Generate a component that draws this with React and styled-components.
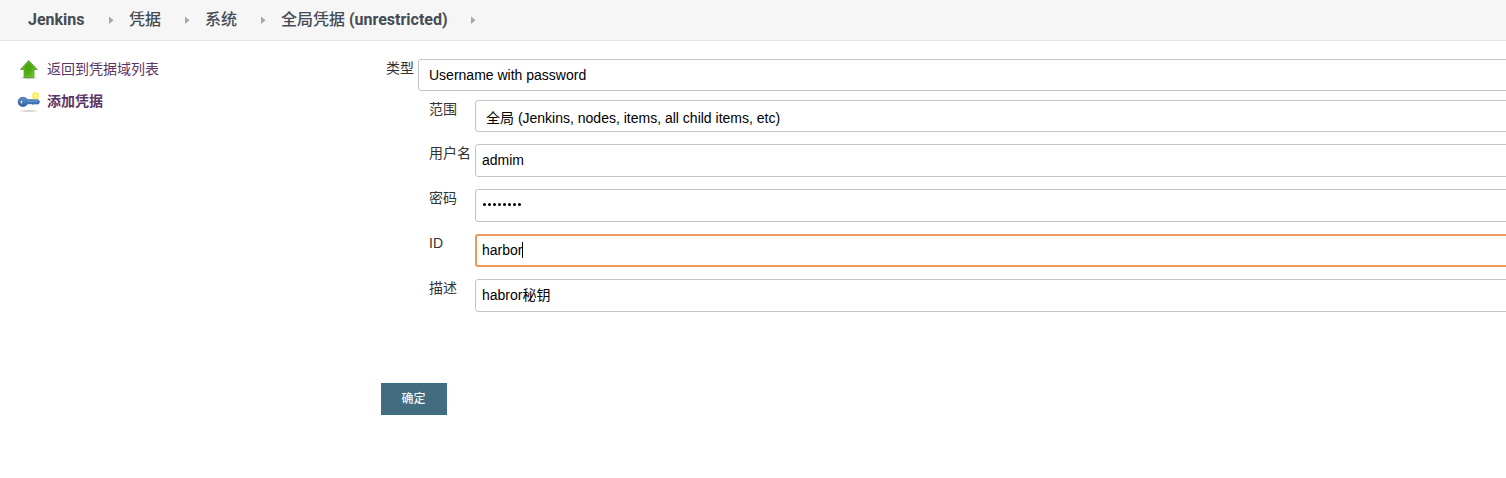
import React from "react";
import styled, { createGlobalStyle } from "styled-components";

const Global = createGlobalStyle`
  * { box-sizing: border-box; }
  html, body { margin: 0; overflow: hidden; background: #fff; }
  body { font-family: "Liberation Sans", "Noto Sans CJK SC", sans-serif; font-size: 14px; color: #333; }
`;

const Page = styled.div`
  height: 478px;
  overflow: hidden;
`;

const Breadcrumbs = styled.nav`
  display: flex;
  align-items: center;
  height: 41px;
  padding: 0 0 0 28px;
  background: #f6f6f6;
  border-bottom: 1px solid #e3e5e9;
  font: 700 16px/24px Roboto, "Noto Sans CJK SC", sans-serif;
  color: #454c54;
`;

const Crumb = styled.a`
  width: ${(p) => p.$width}px;
  white-space: nowrap;
  font-weight: ${(p) => (p.$cjk ? 500 : 700)};
  b { font-weight: 700; }
`;

const Separator = styled.svg`
  flex: none;
  width: 5px;
  height: 8px;
  margin: 0 15px 0 24px;
  fill: #a6a8ab;
`;

const Body = styled.div`
  display: flex;
`;

const Sidebar = styled.aside`
  flex: none;
  width: 381px;
  padding: 12px 0 0 17px;
`;

const Task = styled.a`
  display: flex;
  align-items: center;
  height: 32px;
  color: #5c3566;
  font-family: Roboto, "Noto Sans CJK SC", sans-serif;
  font-size: 14px;
  line-height: 20px;
  font-weight: ${(p) => (p.$active ? 700 : 400)};
  svg { flex: none; margin-right: 6px; }
`;

const Form = styled.form`
  flex: none;
  width: 1140px;
  padding-top: 18px;
`;

const Row = styled.div`
  display: flex;
  height: ${(p) => p.$height}px;
  padding-left: ${(p) => p.$indent}px;
`;

const Label = styled.label`
  flex: none;
  width: ${(p) => p.$width}px;
  line-height: 18px;
  white-space: nowrap;
`;

const Field = styled.div`
  flex: 1;
  display: flex;
  align-items: center;
  height: ${(p) => (p.$select ? 32 : 33)}px;
  padding-top: ${(p) => p.$drop || 0}px;
  padding-bottom: ${(p) => (p.$select ? 0 : 2)}px;
  padding-left: ${(p) => (p.$select ? 10 : p.$focused ? 5 : 6)}px;
  border: ${(p) => (p.$focused ? "2px solid #ee9a5d" : "1px solid #c4c4c4")};
  border-radius: 3px;
  background: #fff;
  color: #000;
  line-height: 20px;
  white-space: nowrap;
`;

const Caret = styled.span`
  width: 1px;
  height: 16px;
  background: #000;
`;

const Dots = styled.span`
  display: flex;
  gap: 2px;
  margin: -1px 0 0 0.5px;
  i { width: 3px; height: 3px; border-radius: 50%; background: #000; }
`;

const Submit = styled.button`
  display: block;
  width: 66px;
  height: 32px;
  margin-top: 59px;
  padding: 0 1px 2px 0;
  border: 1px solid #3b6f8a;
  background: #446c80;
  color: #f3f6f8;
  font: 500 12px/18px "Noto Sans CJK SC", sans-serif;
`;

const Arrow = () => (
  <Separator viewBox="0 0 5 8"><path d="M0 .5 4.5 4.3 0 8Z" /></Separator>
);

const UpIcon = () => (
  <svg width="24" height="24" viewBox="0 0 24 24">
    <defs>
      <linearGradient id="leaf" x1="0" y1="0" x2="1" y2="1">
        <stop offset="0" stopColor="#4a9b0c" />
        <stop offset=".6" stopColor="#4fab12" />
        <stop offset="1" stopColor="#74d628" />
      </linearGradient>
      <radialGradient id="shade">
        <stop offset="0" stopColor="#666" stopOpacity=".6" />
        <stop offset="1" stopColor="#666" stopOpacity="0" />
      </radialGradient>
    </defs>
    <ellipse cx="11.8" cy="20.7" rx="9.5" ry="2" fill="url(#shade)" />
    <path d="M11.7 3.6 20.3 12.5H17V20.5H7V12.5H3.4Z" fill="url(#leaf)" stroke="#459816" strokeWidth=".7" strokeLinejoin="round" />
    <path d="M11.7 5 18.2 11.7H16V19.6H8V11.7H5.3Z" fill="none" stroke="#8ccf58" strokeWidth=".6" opacity=".7" />
  </svg>
);

const KeyIcon = () => (
  <svg width="24" height="24" viewBox="0 0 24 24">
    <defs>
      <linearGradient id="steel" x1="0" y1="0" x2="0" y2="1">
        <stop offset="0" stopColor="#5f92cf" />
        <stop offset="1" stopColor="#2f62a8" />
      </linearGradient>
      <radialGradient id="glow">
        <stop offset="0" stopColor="#fffdd0" />
        <stop offset=".3" stopColor="#fff9a0" />
        <stop offset=".6" stopColor="#fbe93a" />
        <stop offset="1" stopColor="#fff04a" stopOpacity=".35" />
      </radialGradient>
    </defs>
    <ellipse cx="12" cy="22" rx="11" ry="1.5" fill="url(#shade)" opacity=".7" />
    <path d="M5.8 8.4C8.2 8.2 9.7 9.3 10.5 10.7H21L22.6 12.6 21.4 15H20L19 14.4 18 15.5 17 14.5 16 15.5 15 14.7H10.5C9.5 16.7 7.7 17.6 5.4 17.4 2.8 17.2 1.2 15.4 1.2 12.9 1.2 10.2 3 8.5 5.8 8.4Z" fill="url(#steel)" stroke="#2c5b9e" strokeWidth=".8" />
    <ellipse cx="4.5" cy="13" rx="1.3" ry="1.8" fill="#fff" stroke="#204a87" strokeWidth=".6" />
    <path d="M10.5 12.2H20" stroke="#7ba7db" strokeWidth=".7" />
    <circle cx="18.5" cy="6.8" r="4" fill="url(#glow)" />
  </svg>
);

export default function App() {
  return (
    <Page>
      <Global />
      <Breadcrumbs>
        <Crumb $width={57}>Jenkins</Crumb><Arrow />
        <Crumb $cjk $width={32}>凭据</Crumb><Arrow />
        <Crumb $cjk $width={32}>系统</Crumb><Arrow />
        <Crumb $cjk $width={166}>全局凭据 <b>(unrestricted)</b></Crumb><Arrow />
      </Breadcrumbs>
      <Body>
        <Sidebar>
          <Task><UpIcon />返回到凭据域列表</Task>
          <Task $active><KeyIcon />添加凭据</Task>
        </Sidebar>
        <Form>
          <Row $indent={5} $height={41}>
            <Label $width={32}>类型</Label>
            <Field $select>Username with password</Field>
          </Row>
          <Row $indent={48} $height={44}>
            <Label $width={46}>范围</Label>
            <Field $select $drop={3}>全局 (Jenkins, nodes, items, all child items, etc)</Field>
          </Row>
          <Row $indent={48} $height={45}>
            <Label $width={46}>用户名</Label>
            <Field>admim</Field>
          </Row>
          <Row $indent={48} $height={45}>
            <Label $width={46}>密码</Label>
            <Field><Dots>{Array.from({ length: 8 }, (_, i) => <i key={i} />)}</Dots></Field>
          </Row>
          <Row $indent={48} $height={45}>
            <Label $width={46}>ID</Label>
            <Field $focused>harbor<Caret /></Field>
          </Row>
          <Row $indent={48} $height={45}>
            <Label $width={46}>描述</Label>
            <Field>habror秘钥</Field>
          </Row>
          <Submit type="button">确定</Submit>
        </Form>
      </Body>
    </Page>
  );
}
